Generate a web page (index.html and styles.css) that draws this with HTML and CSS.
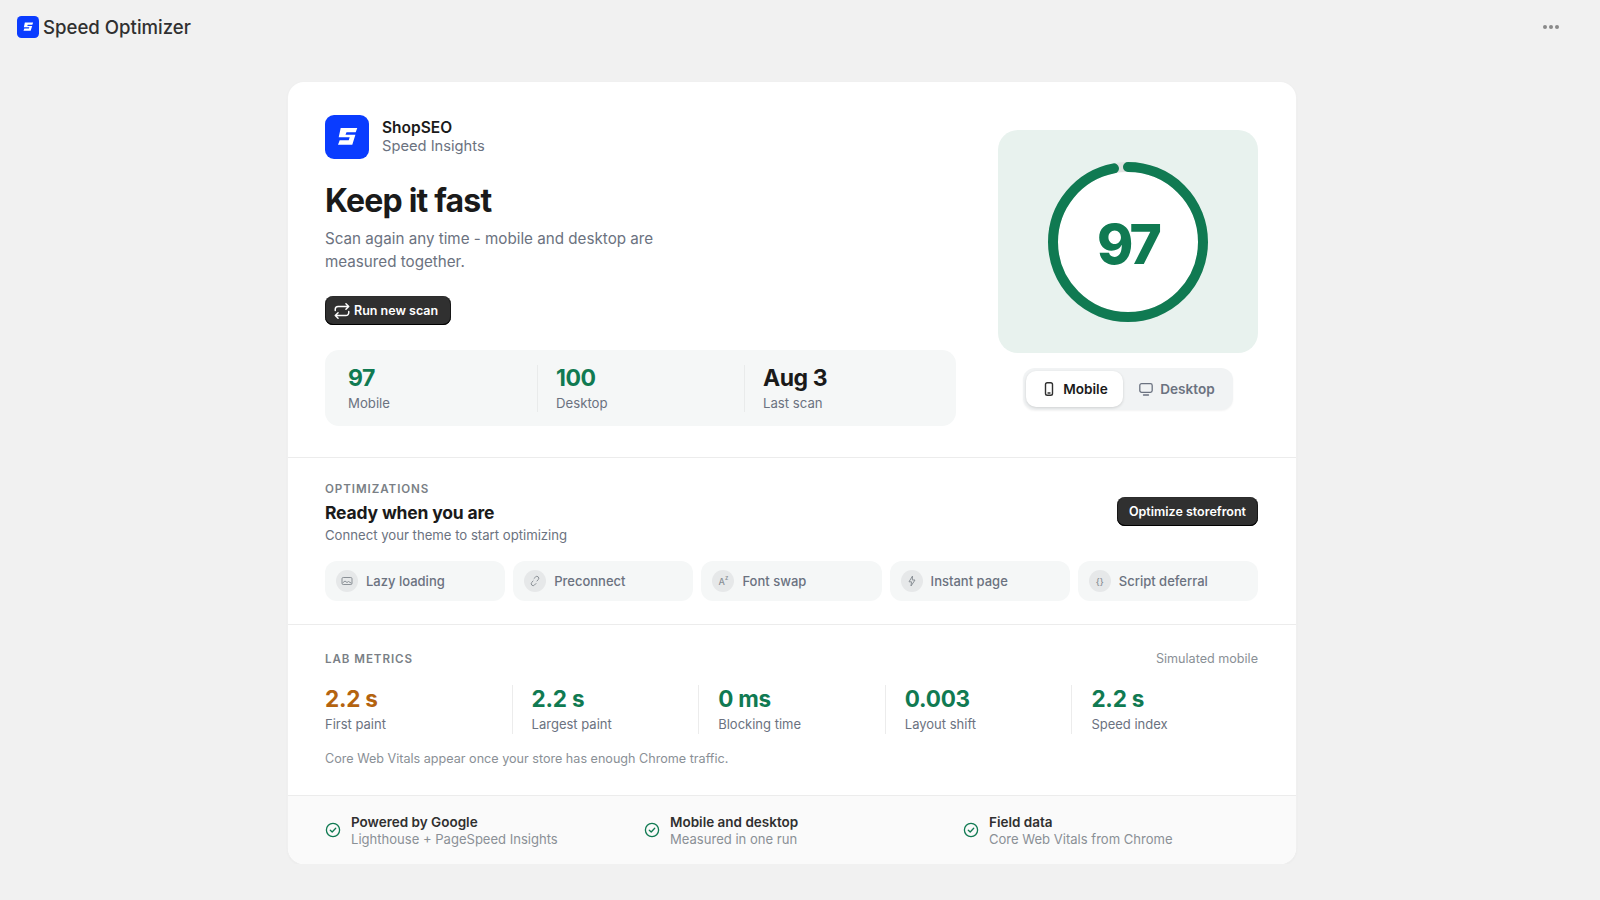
FILE: index.html
```html
<!DOCTYPE html>
<html lang="en">
<head>
    <meta charset="UTF-8">
    <title>Speed Optimizer</title>
    <link rel="stylesheet" href="styles.css">
</head>
<body>
    <header class="topbar">
        <div class="topbar-title">
            <svg class="topbar-logo" viewBox="0 0 44 44">
                <rect width="44" height="44" rx="9" fill="#0a3cff"/>
                <path d="M15.700 13H32.300L30.700 17.300H21.500L20.500 19.800H30.400L27.300 29.700H13L14.700 25.200H23.700L24.700 22.300H13.700z" fill="#fff"/>
            </svg>
            <span>Speed Optimizer</span>
        </div>
        <div class="topbar-dots"><i></i><i></i><i></i></div>
    </header>

    <main class="card">
        <section class="hero">
            <div class="hero-left">
                <div class="brand">
                    <svg class="brand-logo" viewBox="0 0 44 44">
                        <rect width="44" height="44" rx="9" fill="#0a3cff"/>
                        <path d="M15.700 13H32.300L30.700 17.300H21.500L20.500 19.800H30.400L27.300 29.700H13L14.700 25.200H23.700L24.700 22.300H13.700z" fill="#fff"/>
                    </svg>
                    <div class="brand-text">
                        <div class="brand-name">ShopSEO</div>
                        <div class="brand-sub">Speed Insights</div>
                    </div>
                </div>
                <h1>Keep it fast</h1>
                <p class="hero-text">Scan again any time - mobile and desktop are measured together.</p>
                <button class="dark-btn scan-btn">
                    <svg viewBox="0 0 16 16" width="18" height="18" fill="none" stroke="#fff" stroke-width="1.300" stroke-linecap="round" stroke-linejoin="round">
                        <path d="M2 7.500V6.500a2.500 2.500 0 0 1 2.500-2.500H14M11.500 1.500L14 4l-2.500 2.500"/>
                        <path d="M14 8.500v1a2.500 2.500 0 0 1-2.500 2.500H2M4.500 9.500L2 12l2.500 2.500"/>
                    </svg>
                    Run new scan
                </button>
                <div class="stats">
                    <div class="stat">
                        <div class="stat-value green">97</div>
                        <div class="stat-label">Mobile</div>
                    </div>
                    <div class="stat">
                        <div class="stat-value green">100</div>
                        <div class="stat-label">Desktop</div>
                    </div>
                    <div class="stat">
                        <div class="stat-value">Aug 3</div>
                        <div class="stat-label">Last scan</div>
                    </div>
                </div>
            </div>

            <div class="hero-right">
                <div class="score-panel">
                    <div class="ring">
                        <svg viewBox="0 0 160 160" width="160" height="160">
                            <circle cx="80" cy="80" r="75" fill="#fff" stroke="#dfe3e1" stroke-width="10"/>
                            <circle cx="80" cy="80" r="75" fill="none" stroke="#107a52" stroke-width="10" stroke-linecap="round" pathLength="100" stroke-dasharray="97 100" transform="rotate(-90 80 80)"/>
                        </svg>
                        <div class="ring-value">97</div>
                    </div>
                </div>
                <div class="toggle">
                    <div class="toggle-item active">
                        <svg viewBox="0 0 16 16" width="16" height="16" fill="none" stroke="#303030" stroke-width="1.400">
                            <rect x="4.500" y="1.700" width="7" height="12.600" rx="1.800"/>
                            <path d="M7 12h2" stroke-linecap="round"/>
                        </svg>
                        Mobile
                    </div>
                    <div class="toggle-item">
                        <svg viewBox="0 0 16 16" width="16" height="16" fill="none" stroke="#6b7280" stroke-width="1.300" stroke-linecap="round">
                            <rect x="1.800" y="2.700" width="12.400" height="8.600" rx="1.800"/>
                            <path d="M5.500 14h5"/>
                        </svg>
                        Desktop
                    </div>
                </div>
            </div>
        </section>

        <section class="optimizations">
            <div class="opt-head">
                <div>
                    <div class="eyebrow">OPTIMIZATIONS</div>
                    <h2>Ready when you are</h2>
                    <p class="opt-sub">Connect your theme to start optimizing</p>
                </div>
                <button class="dark-btn opt-btn">Optimize storefront</button>
            </div>
            <div class="pills">
                <div class="pill">
                    <span class="pill-icon">
                        <svg viewBox="0 0 12 12" width="12" height="12" fill="none" stroke="#8a9096" stroke-width="1">
                            <rect x="1" y="2.500" width="10" height="7" rx="1.200"/>
                            <path d="M1.500 8l2.500-2 2 1.500 1.500-1 3 1.800"/>
                        </svg>
                    </span>
                    Lazy loading
                </div>
                <div class="pill">
                    <span class="pill-icon">
                        <svg viewBox="0 0 12 12" width="12" height="12" fill="none" stroke="#8a9096" stroke-width="1" stroke-linecap="round">
                            <path d="M5 3.500l1.500-1.500a1.800 1.800 0 0 1 2.800 2.500L8 6M7 8.500L5.500 10a1.800 1.800 0 0 1-2.800-2.500L4 6"/>
                        </svg>
                    </span>
                    Preconnect
                </div>
                <div class="pill">
                    <span class="pill-icon pill-icon-text">A<sup>z</sup></span>
                    Font swap
                </div>
                <div class="pill">
                    <span class="pill-icon">
                        <svg viewBox="0 0 12 12" width="12" height="12" fill="none" stroke="#8a9096" stroke-width="1" stroke-linejoin="round">
                            <path d="M6.500 1L3 6.800h2.500L5 11l4-6H6.300z"/>
                        </svg>
                    </span>
                    Instant page
                </div>
                <div class="pill">
                    <span class="pill-icon pill-icon-text">{}</span>
                    Script deferral
                </div>
            </div>
        </section>

        <section class="lab">
            <div class="lab-head">
                <div class="eyebrow">LAB METRICS</div>
                <div class="lab-note">Simulated mobile</div>
            </div>
            <div class="metrics">
                <div class="metric">
                    <div class="metric-value orange">2.2 s</div>
                    <div class="metric-label">First paint</div>
                </div>
                <div class="metric">
                    <div class="metric-value green">2.2 s</div>
                    <div class="metric-label">Largest paint</div>
                </div>
                <div class="metric">
                    <div class="metric-value green">0 ms</div>
                    <div class="metric-label">Blocking time</div>
                </div>
                <div class="metric">
                    <div class="metric-value green">0.003</div>
                    <div class="metric-label">Layout shift</div>
                </div>
                <div class="metric">
                    <div class="metric-value green">2.2 s</div>
                    <div class="metric-label">Speed index</div>
                </div>
            </div>
            <p class="lab-foot">Core Web Vitals appear once your store has enough Chrome traffic.</p>
        </section>

        <footer class="card-foot">
            <div class="foot-item">
                <svg viewBox="0 0 16 16" width="16" height="16" fill="none" stroke="#107a52" stroke-width="1.300" stroke-linecap="round" stroke-linejoin="round">
                    <circle cx="8" cy="8" r="6.600"/>
                    <path d="M5.300 8.200l1.900 1.800 3.500-3.700"/>
                </svg>
                <div>
                    <div class="foot-title">Powered by Google</div>
                    <div class="foot-sub">Lighthouse + PageSpeed Insights</div>
                </div>
            </div>
            <div class="foot-item">
                <svg viewBox="0 0 16 16" width="16" height="16" fill="none" stroke="#107a52" stroke-width="1.300" stroke-linecap="round" stroke-linejoin="round">
                    <circle cx="8" cy="8" r="6.600"/>
                    <path d="M5.300 8.200l1.900 1.800 3.500-3.700"/>
                </svg>
                <div>
                    <div class="foot-title">Mobile and desktop</div>
                    <div class="foot-sub">Measured in one run</div>
                </div>
            </div>
            <div class="foot-item">
                <svg viewBox="0 0 16 16" width="16" height="16" fill="none" stroke="#107a52" stroke-width="1.300" stroke-linecap="round" stroke-linejoin="round">
                    <circle cx="8" cy="8" r="6.600"/>
                    <path d="M5.300 8.200l1.900 1.800 3.500-3.700"/>
                </svg>
                <div>
                    <div class="foot-title">Field data</div>
                    <div class="foot-sub">Core Web Vitals from Chrome</div>
                </div>
            </div>
        </footer>
    </main>
</body>
</html>
```

FILE: styles.css
```css
* {
    box-sizing: border-box;
}

body {
    margin: 0;
    padding-right: 16px;
    background: #f1f1f1;
    color: #1a1a1a;
    font-family: Inter, "Liberation Sans", sans-serif;
}

h1, h2, p {
    margin: 0;
}

.green {
    color: #107a52;
}

.orange {
    color: #b4630f;
}

.topbar {
    height: 54px;
    padding: 0 25px 0 17px;
    display: flex;
    align-items: center;
    justify-content: space-between;
}

.topbar-title {
    display: flex;
    align-items: center;
    gap: 4px;
    font-size: 18.600px;
    font-weight: 500;
    color: #303030;
}

.topbar-logo {
    width: 22px;
    height: 22px;
}

.topbar-dots {
    display: flex;
    gap: 2px;
}

.topbar-dots i {
    width: 4px;
    height: 4px;
    border-radius: 50%;
    background: #8a8a8a;
}

.card {
    width: 1008px;
    margin: 28px auto 0;
    background: #fff;
    border-radius: 16px;
    box-shadow: 0 0 0 1px #f0f0f0, 0 1px 3px rgba(0,0,0,0.06);
    overflow: hidden;
}

.hero {
    height: 376px;
    padding: 33px 38px 0 37px;
    display: flex;
    justify-content: space-between;
    border-bottom: 1px solid #ececec;
}

.hero-left {
    width: 631px;
}

.brand {
    display: flex;
    align-items: center;
    gap: 13px;
}

.brand-logo {
    width: 44px;
    height: 44px;
}

.brand-text {
    padding-bottom: 2px;
}

.brand-name {
    font-size: 15.500px;
    line-height: 19px;
    font-weight: 600;
}

.brand-sub {
    font-size: 14.700px;
    line-height: 18px;
    color: #6b7280;
}

h1 {
    margin-top: 20px;
    font-size: 32px;
    line-height: 44px;
    font-weight: 700;
    letter-spacing: -0.025em;
}

.hero-text {
    width: 360px;
    margin-top: 4px;
    font-size: 15.200px;
    line-height: 23px;
    color: #6b7280;
}

.dark-btn {
    height: 29px;
    padding: 0 12px;
    display: inline-flex;
    align-items: center;
    gap: 3px;
    border: none;
    border-radius: 8px;
    background: #303030;
    color: #fff;
    font-family: inherit;
    font-size: 12.500px;
    font-weight: 600;
    box-shadow: inset 0 -1px 0 #000, inset 0 0 0 1px rgba(0,0,0,0.5), inset 0 1px 0 rgba(255,255,255,0.2);
}

.scan-btn {
    margin-top: 23px;
    padding: 0 13px 0 8px;
}

.stats {
    margin-top: 25px;
    height: 76px;
    padding: 15px 23px;
    display: grid;
    grid-template-columns: 189px 207px 1fr;
    background: #f5f7f7;
    border-radius: 14px;
}

.stat + .stat {
    padding-left: 18px;
    border-left: 1px solid #e9ebeb;
}

.stat-value {
    font-size: 23px;
    line-height: 27px;
    font-weight: 700;
    letter-spacing: -0.02em;
}

.stat-label {
    margin-top: 3px;
    font-size: 13.200px;
    line-height: 17px;
    color: #6b7280;
}

.hero-right {
    width: 260px;
    margin-top: 15px;
}

.score-panel {
    height: 223px;
    display: flex;
    align-items: center;
    justify-content: center;
    background: #e8f2ee;
    border-radius: 20px;
}

.ring {
    position: relative;
    width: 160px;
    height: 160px;
}

.ring svg {
    display: block;
}

.ring-value {
    position: absolute;
    inset: 4px 0 0;
    display: flex;
    align-items: center;
    justify-content: center;
    font-size: 55px;
    font-weight: 800;
    letter-spacing: -0.05em;
    color: #107a52;
}

.toggle {
    width: 210px;
    height: 42px;
    margin: 15px auto 0;
    padding: 3px;
    display: flex;
    background: #f1f3f4;
    border-radius: 12px;
    box-shadow: 0 1px 2px rgba(0,0,0,0.05);
}

.toggle-item {
    flex: 1;
    display: flex;
    align-items: center;
    justify-content: center;
    gap: 6px;
    font-size: 13.600px;
    font-weight: 600;
    color: #6b7280;
    border-radius: 10px;
}

.toggle-item.active {
    flex: 0 0 97px;
    background: #fff;
    color: #1a1a1a;
    box-shadow: 0 1px 3px rgba(0,0,0,0.15);
}

.optimizations {
    height: 167px;
    padding: 24px 38px 0 37px;
    border-bottom: 1px solid #ececec;
}

.opt-head {
    display: flex;
    justify-content: space-between;
    align-items: flex-start;
}

.opt-btn {
    margin-top: 15px;
}

.eyebrow {
    font-size: 11.600px;
    line-height: 14px;
    font-weight: 600;
    letter-spacing: 0.08em;
    color: #7a7f86;
}

h2 {
    margin-top: 4px;
    font-size: 17.500px;
    line-height: 26px;
    font-weight: 700;
    letter-spacing: -0.01em;
}

.opt-sub {
    font-size: 13.150px;
    line-height: 18px;
    color: #6b7280;
}

.pills {
    margin-top: 17px;
    display: grid;
    grid-template-columns: repeat(5, 1fr);
    gap: 8px;
}

.pill {
    height: 40px;
    padding: 0 11px;
    display: flex;
    align-items: center;
    gap: 8px;
    background: #f5f7f7;
    border-radius: 12px;
    font-size: 13px;
    font-weight: 500;
    color: #6b7280;
}

.pill-icon {
    width: 22px;
    height: 22px;
    display: flex;
    align-items: center;
    justify-content: center;
    background: #e6e8e9;
    border-radius: 50%;
}

.pill-icon-text {
    font-size: 9px;
    color: #8a9096;
}

.pill-icon-text sup {
    font-size: 6px;
    line-height: 1;
    align-self: flex-start;
    margin-top: 5px;
}

.lab {
    height: 171px;
    padding: 26px 38px 0 37px;
    border-bottom: 1px solid #ececec;
}

.lab-head {
    display: flex;
    justify-content: space-between;
    align-items: center;
}

.lab-note {
    font-size: 12.600px;
    color: #8a9096;
}

.metrics {
    margin-top: 19px;
    display: grid;
    grid-template-columns: repeat(5, 1fr);
}

.metric + .metric {
    padding-left: 19px;
    border-left: 1px solid #ececec;
}

.metric-value {
    font-size: 22.500px;
    line-height: 28px;
    font-weight: 700;
    letter-spacing: -0.01em;
}

.metric-label {
    margin-top: 2px;
    font-size: 13px;
    line-height: 19px;
    color: #6b7280;
}

.lab-foot {
    margin-top: 16px;
    font-size: 12.600px;
    line-height: 18px;
    color: #8a9096;
}

.card-foot {
    height: 68px;
    padding: 0 38px 0 37px;
    display: grid;
    grid-template-columns: repeat(3, 1fr);
    gap: 24px;
    background: #fafafa;
}

.foot-item {
    display: flex;
    align-items: center;
    gap: 10px;
}

.foot-title {
    font-size: 13.500px;
    line-height: 18px;
    font-weight: 600;
    color: #303030;
}

.foot-sub {
    font-size: 13.050px;
    line-height: 17px;
    color: #8a9096;
}
```
